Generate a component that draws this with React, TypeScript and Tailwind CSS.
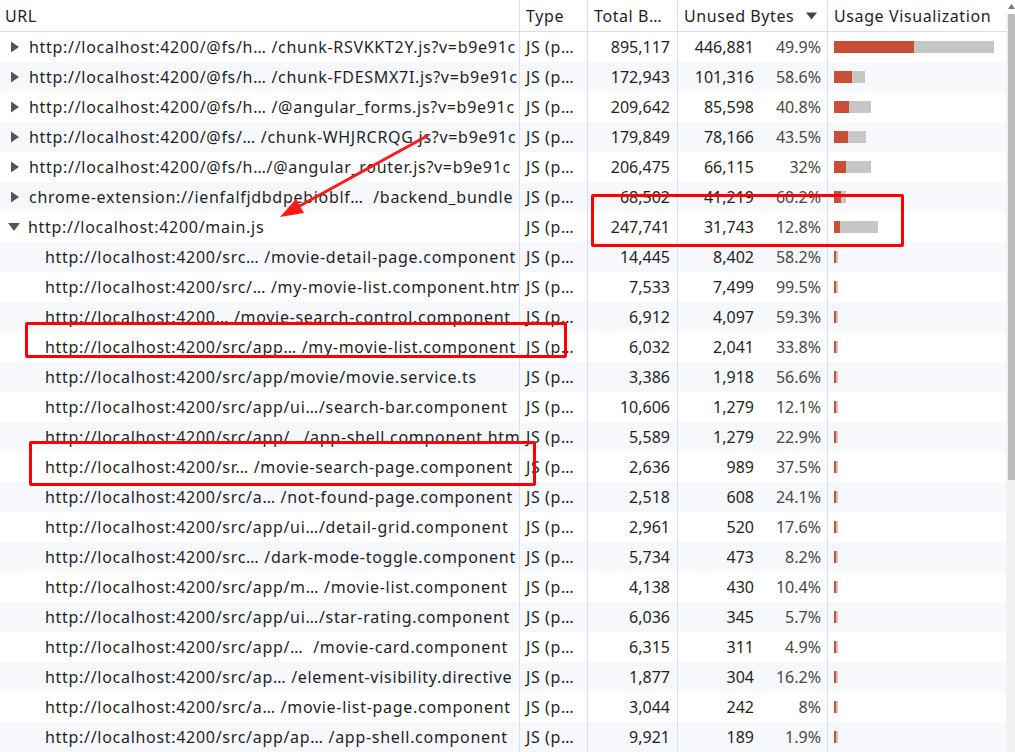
const rows = [
  { url: "http://localhost:4200/@fs/h… /chunk-RSVKKT2Y.js?v=b9e91c", total: 895117, unused: 446881, pct: "49.9%", kind: "closed" },
  { url: "http://localhost:4200/@fs/h… /chunk-FDESMX7I.js?v=b9e91c", total: 172943, unused: 101316, pct: "58.6%", kind: "closed" },
  { url: "http://localhost:4200/@fs/h… /@angular_forms.js?v=b9e91c", total: 209642, unused: 85598, pct: "40.8%", kind: "closed" },
  { url: "http://localhost:4200/@fs/… /chunk-WHJRCRQG.js?v=b9e91c", total: 179849, unused: 78166, pct: "43.5%", kind: "closed" },
  { url: "http://localhost:4200/@fs/h…/@angular_router.js?v=b9e91c", total: 206475, unused: 66115, pct: "32%", kind: "closed" },
  { url: "chrome-extension://ienfalfjdbdpebioblf…  /backend_bundle", total: 68502, unused: 41219, pct: "60.2%", kind: "closed" },
  { url: "http://localhost:4200/main.js", total: 247741, unused: 31743, pct: "12.8%", kind: "open" },
  { url: "http://localhost:4200/src… /movie-detail-page.component", total: 14445, unused: 8402, pct: "58.2%", kind: "child" },
  { url: "http://localhost:4200/src/… /my-movie-list.component.html", total: 7533, unused: 7499, pct: "99.5%", kind: "child" },
  { url: "http://localhost:4200… /movie-search-control.component", total: 6912, unused: 4097, pct: "59.3%", kind: "child" },
  { url: "http://localhost:4200/src/app… /my-movie-list.component", total: 6032, unused: 2041, pct: "33.8%", kind: "child" },
  { url: "http://localhost:4200/src/app/movie/movie.service.ts", total: 3386, unused: 1918, pct: "56.6%", kind: "child" },
  { url: "http://localhost:4200/src/app/ui…/search-bar.component", total: 10606, unused: 1279, pct: "12.1%", kind: "child" },
  { url: "http://localhost:4200/src/app/…/app-shell.component.html", total: 5589, unused: 1279, pct: "22.9%", kind: "child" },
  { url: "http://localhost:4200/sr… /movie-search-page.component", total: 2636, unused: 989, pct: "37.5%", kind: "child" },
  { url: "http://localhost:4200/src/a… /not-found-page.component", total: 2518, unused: 608, pct: "24.1%", kind: "child" },
  { url: "http://localhost:4200/src/app/ui…/detail-grid.component", total: 2961, unused: 520, pct: "17.6%", kind: "child" },
  { url: "http://localhost:4200/src… /dark-mode-toggle.component", total: 5734, unused: 473, pct: "8.2%", kind: "child" },
  { url: "http://localhost:4200/src/app/m… /movie-list.component", total: 4138, unused: 430, pct: "10.4%", kind: "child" },
  { url: "http://localhost:4200/src/app/ui…/star-rating.component", total: 6036, unused: 345, pct: "5.7%", kind: "child" },
  { url: "http://localhost:4200/src/app/…  /movie-card.component", total: 6315, unused: 311, pct: "4.9%", kind: "child" },
  { url: "http://localhost:4200/src/ap… /element-visibility.directive", total: 1877, unused: 304, pct: "16.2%", kind: "child" },
  { url: "http://localhost:4200/src/a… /movie-list-page.component", total: 3044, unused: 242, pct: "8%", kind: "child" },
  { url: "http://localhost:4200/src/app/ap… /app-shell.component", total: 9921, unused: 189, pct: "1.9%", kind: "child" },
]

const MAX = 895117
const SCALE = 160 / MAX

function fmt(n: number) {
  return n.toLocaleString("en-US")
}

function UsageBar({ total, unused }: { total: number; unused: number }) {
  const red = Math.max(2, Math.round(unused * SCALE))
  const all = Math.max(red + 2, Math.round(total * SCALE))
  return (
    <div className="flex h-3" style={{ width: all }}>
      <div className="h-full bg-[#c94e38]" style={{ width: red }} />
      <div className="h-full flex-1 bg-[#c6c6c6]" />
    </div>
  )
}

function Caret({ open }: { open: boolean }) {
  return open ? (
    <svg width="20" height="10" viewBox="0 0 20 10" className="shrink-0 -ml-[1px]">
      <polygon points="0,1 12,1 6,9" fill="#555" />
    </svg>
  ) : (
    <svg width="20" height="12" viewBox="0 0 20 12" className="shrink-0">
      <polygon points="2,0.5 10,6 2,11.5" fill="#555" />
    </svg>
  )
}

export default function App() {
  return (
    <div
      className="relative w-[1015px] h-[752px] overflow-hidden bg-white text-[#1f1f1f] text-[16px]"
      style={{ fontFamily: '"Noto Sans", "Open Sans", sans-serif' }}
    >
      <div className="flex h-full">
        <div className="w-[1006px] flex flex-col">
          {/* Header */}
          <div className="grid grid-cols-[520px_68px_90px_150px_178px] h-[32px] border-b border-[#d3e0f5] bg-white tracking-[0.6px]">
            <div className="flex items-center pl-[5px] border-r border-[#d3e0f5]">URL</div>
            <div className="flex items-center pl-[6px] border-r border-[#d3e0f5]">Type</div>
            <div className="flex items-center pl-[6px] border-r border-[#d3e0f5] whitespace-nowrap overflow-hidden">Total B…</div>
            <div className="flex items-center pl-[6px] pr-[10px] border-r border-[#d3e0f5] justify-between whitespace-nowrap">
              <span>Unused Bytes</span>
              <svg width="11" height="8" viewBox="0 0 11 8">
                <polygon points="0,0.5 11,0.5 5.5,7.5" fill="#444" />
              </svg>
            </div>
            <div className="flex items-center pl-[6px] whitespace-nowrap overflow-hidden">Usage Visualization</div>
          </div>

          {/* Rows */}
          {rows.map((r, i) => (
            <div
              key={i}
              className={`grid grid-cols-[520px_68px_90px_150px_178px] h-[30px] ${i % 2 === 0 ? "bg-white" : "bg-[#f6f8fc]"}`}
            >
              <div
                className={`flex items-center overflow-hidden whitespace-nowrap border-r border-[#d3e0f5] tracking-[0.7px] ${r.kind === "child" ? "pl-[45px]" : "pl-[9px]"}`}
              >
                {r.kind !== "child" && <Caret open={r.kind === "open"} />}
                <span className="whitespace-pre">{r.url}</span>
              </div>
              <div className="flex items-center pl-[6px] border-r border-[#d3e0f5] whitespace-nowrap overflow-hidden tracking-[0.6px]">JS (p…</div>
              <div className="flex items-center justify-end pr-[7px] border-r border-[#d3e0f5]">{fmt(r.total)}</div>
              <div className="flex items-center border-r border-[#d3e0f5]">
                <span className="w-[76px] text-right">{fmt(r.unused)}</span>
                <span className="w-[67px] text-right text-[#474747]">{r.pct}</span>
              </div>
              <div className="flex items-center pl-[6px]">
                <UsageBar total={r.total} unused={r.unused} />
              </div>
            </div>
          ))}
        </div>

        {/* Scrollbar */}
        <div className="w-[9px] h-full bg-[#f1f1f1] flex flex-col">
          <div className="h-[14px] bg-white flex items-start justify-end pt-[4px]">
            <svg width="7" height="5" viewBox="0 0 7 5">
              <polygon points="0,5 7,5 3.5,0" fill="#777" />
            </svg>
          </div>
          <div className="ml-[2px] h-[466px] bg-[#bdbdbd]" />
        </div>
      </div>

      {/* Annotations */}
      <div className="absolute left-[591px] top-[194px] w-[313px] h-[53px] border-[3px] border-[#ff0000] rounded-[2px]" />
      <div className="absolute left-[25px] top-[322px] w-[542px] h-[36px] border-[3px] border-[#ff0000] rounded-[2px]" />
      <div className="absolute left-[29px] top-[441px] w-[507px] h-[45px] border-[3px] border-[#ff0000] rounded-[2px]" />
      <svg className="absolute left-0 top-0 pointer-events-none" width="1015" height="752">
        <line x1="427" y1="136" x2="294" y2="209" stroke="#ff1a1a" strokeWidth="3" strokeLinecap="round" />
        <polygon points="280,217 296,199 304,213" fill="#ff1a1a" />
      </svg>
    </div>
  )
}
